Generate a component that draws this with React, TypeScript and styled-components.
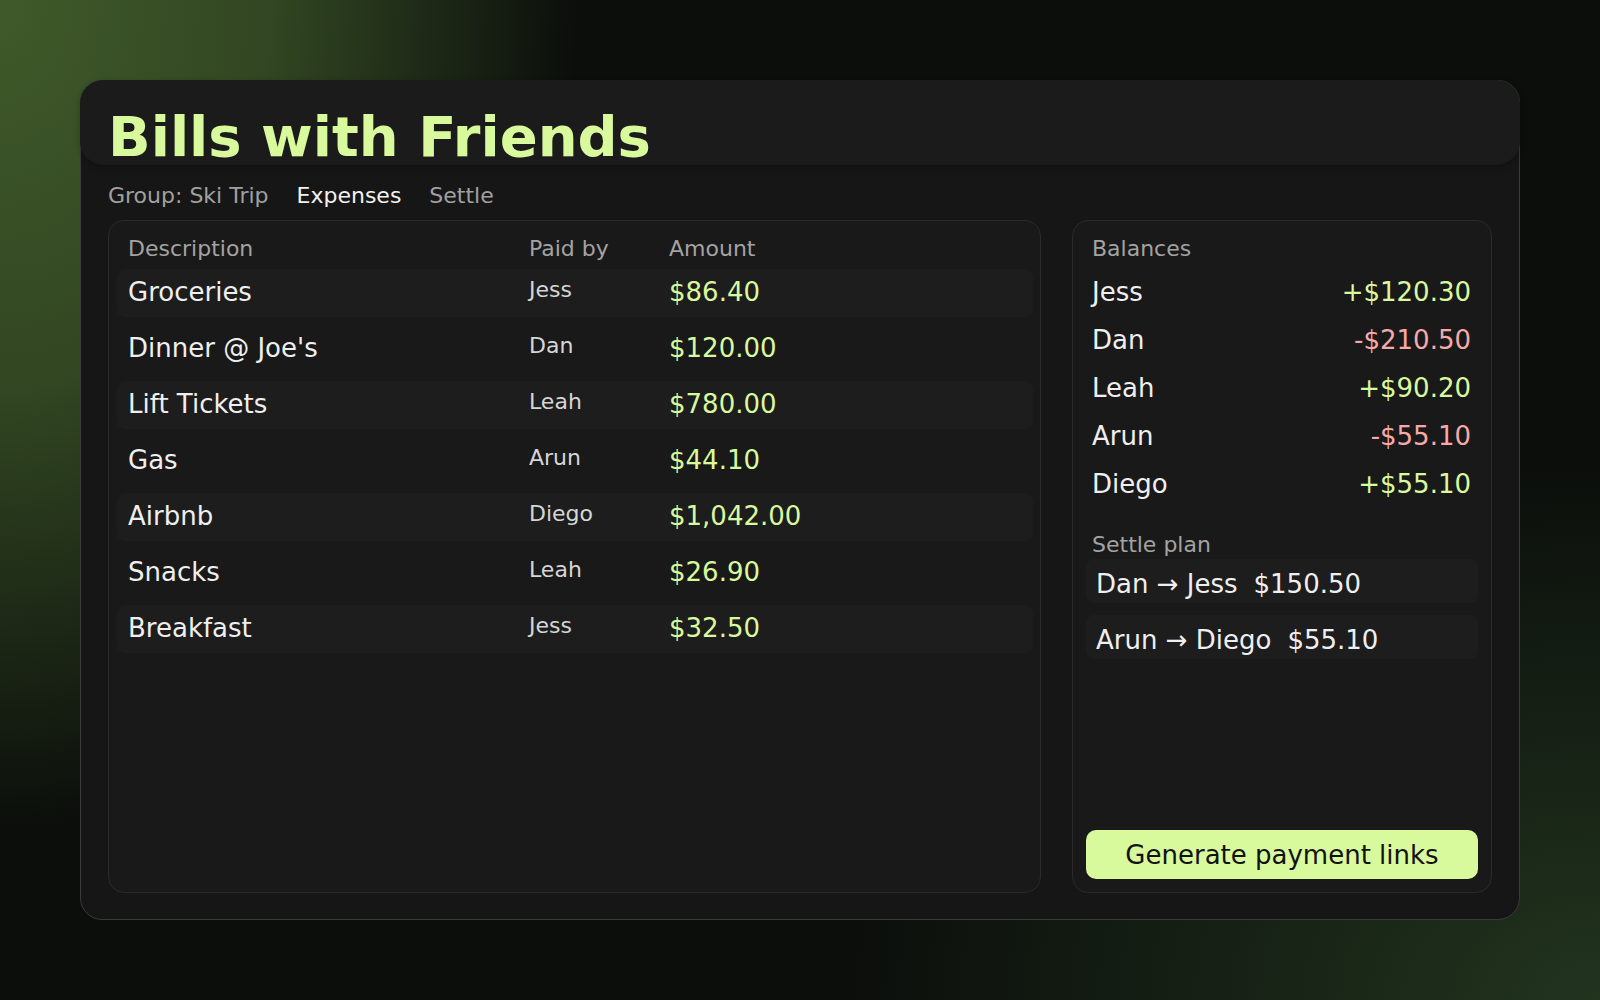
import React from 'react';
import styled, { createGlobalStyle } from 'styled-components';

type Expense = { desc: string; payer: string; amount: string };
type Balance = { name: string; amount: string; owes: boolean };
type Transfer = { from: string; to: string; amount: string };

const expenses: Expense[] = [
  { desc: 'Groceries', payer: 'Jess', amount: '$86.40' },
  { desc: "Dinner @ Joe's", payer: 'Dan', amount: '$120.00' },
  { desc: 'Lift Tickets', payer: 'Leah', amount: '$780.00' },
  { desc: 'Gas', payer: 'Arun', amount: '$44.10' },
  { desc: 'Airbnb', payer: 'Diego', amount: '$1,042.00' },
  { desc: 'Snacks', payer: 'Leah', amount: '$26.90' },
  { desc: 'Breakfast', payer: 'Jess', amount: '$32.50' },
];

const balances: Balance[] = [
  { name: 'Jess', amount: '+$120.30', owes: false },
  { name: 'Dan', amount: '-$210.50', owes: true },
  { name: 'Leah', amount: '+$90.20', owes: false },
  { name: 'Arun', amount: '-$55.10', owes: true },
  { name: 'Diego', amount: '+$55.10', owes: false },
];

const plan: Transfer[] = [
  { from: 'Dan', to: 'Jess', amount: '$150.50' },
  { from: 'Arun', to: 'Diego', amount: '$55.10' },
];

export default function App(): React.ReactElement {
  return (
    <>
      <GlobalStyle />
      <Page>
        <Card>
          <Header>
            <Title>Bills with Friends</Title>
          </Header>
          <Tabs>
            <Tab>Group: Ski Trip</Tab>
            <Tab $active>Expenses</Tab>
            <Tab>Settle</Tab>
          </Tabs>
          <Body>
            <Panel>
              <TableHead>
                <span>Description</span>
                <span>Paid by</span>
                <span>Amount</span>
              </TableHead>
              <Rows>
                {expenses.map((e, i) => (
                  <ExpenseRow key={e.desc} $striped={i % 2 === 0}>
                    <Desc>{e.desc}</Desc>
                    <Payer>{e.payer}</Payer>
                    <Money>{e.amount}</Money>
                  </ExpenseRow>
                ))}
              </Rows>
            </Panel>
            <SidePanel>
              <Label>Balances</Label>
              {balances.map(b => (
                <BalanceRow key={b.name}>
                  <span>{b.name}</span>
                  <BalanceAmount $owes={b.owes}>{b.amount}</BalanceAmount>
                </BalanceRow>
              ))}
              <PlanLabel>Settle plan</PlanLabel>
              <PlanList>
                {plan.map(t => (
                  <PlanRow key={t.from}>
                    {t.from} → {t.to}
                    <PlanAmount>{t.amount}</PlanAmount>
                  </PlanRow>
                ))}
              </PlanList>
              <Button type="button">Generate payment links</Button>
            </SidePanel>
          </Body>
        </Card>
      </Page>
    </>
  );
}

const GlobalStyle = createGlobalStyle`
  html, body {
    margin: 0;
    padding: 0;
  }
  body {
    font-family: 'DejaVu Sans', 'Liberation Sans', sans-serif;
    color: #efefef;
    background:
      radial-gradient(ellipse 680px 980px at 0% 0%, rgba(64, 90, 42, 1) 0%, rgba(56, 80, 38, 0.85) 40%, rgba(11, 14, 11, 0) 85%),
      radial-gradient(ellipse 900px 640px at 100% 100%, rgba(34, 52, 30, 1) 0%, rgba(28, 44, 26, 0.6) 45%, rgba(11, 14, 11, 0) 85%),
      #0b0e0b;
    min-height: 100vh;
  }
`;

const Page = styled.div`
  box-sizing: border-box;
  height: 1000px;
  padding: 80px;
`;

const Card = styled.div`
  box-sizing: border-box;
  width: 1440px;
  height: 840px;
  display: flex;
  flex-direction: column;
  background: #161616;
  border: 1px solid #3a3a3a;
  border-radius: 22px;
`;

const Header = styled.header`
  box-sizing: border-box;
  height: 85px;
  margin: -1px -1px 0;
  padding: 29px 28px 0;
  background: #1b1b1b;
  border-radius: 24px;
  box-shadow: 0 2px 6px rgba(0, 0, 0, 0.25);
`;

const Title = styled.h1`
  margin: 0;
  font-size: 56px;
  line-height: 56px;
  font-weight: 700;
  color: #d9f99d;
`;

const Tabs = styled.nav`
  display: flex;
  gap: 28px;
  margin: 18px 0 11px;
  padding: 0 27px;
`;

const Tab = styled.span<{ $active?: boolean }>`
  font-size: 22px;
  line-height: 26px;
  color: ${p => (p.$active ? '#f2f2f2' : '#a0a0a0')};
`;

const Body = styled.div`
  flex: 1;
  display: grid;
  grid-template-columns: 1fr 420px;
  gap: 31px;
  padding: 0 27px 26px;
  min-height: 0;
`;

const Panel = styled.section`
  box-sizing: border-box;
  background: #191919;
  border: 1px solid #2a2a2a;
  border-radius: 16px;
  padding: 15px 7px 8px 8px;
`;

const cols = `
  display: grid;
  grid-template-columns: 401px 140px 1fr;
  padding: 0 12px 0 11px;
`;

const TableHead = styled.div`
  ${cols};
  font-size: 22px;
  line-height: 26px;
  color: #a3a3a3;
  margin-bottom: 7px;
`;

const Rows = styled.div`
  display: flex;
  flex-direction: column;
  gap: 8px;
`;

const ExpenseRow = styled.div<{ $striped: boolean }>`
  ${cols};
  box-sizing: border-box;
  height: 48px;
  padding-top: 8px;
  align-items: start;
  border-radius: 8px;
  background: ${p => (p.$striped ? '#1d1d1d' : 'transparent')};
`;

const Desc = styled.span`
  font-size: 26px;
  color: #efefef;
`;

const Payer = styled.span`
  font-size: 22px;
  color: #d6d6d6;
`;

const Money = styled.span`
  font-size: 26px;
  color: #d9f99d;
`;

const SidePanel = styled.aside`
  box-sizing: border-box;
  display: flex;
  flex-direction: column;
  background: #191919;
  border: 1px solid #2a2a2a;
  border-radius: 16px;
  padding: 15px 13px 13px 13px;
`;

const Label = styled.div`
  font-size: 22px;
  line-height: 26px;
  color: #a3a3a3;
  padding: 0 6px;
  margin-bottom: 6px;
`;

const PlanLabel = styled(Label)`
  margin: 24px 0 1px;
`;

const BalanceRow = styled.div`
  height: 48px;
  display: flex;
  align-items: center;
  justify-content: space-between;
  padding: 0 7px 0 6px;
  font-size: 26px;
  color: #efefef;
`;

const BalanceAmount = styled.span<{ $owes: boolean }>`
  color: ${p => (p.$owes ? '#f6a9a9' : '#d9f99d')};
`;

const PlanList = styled.div`
  display: flex;
  flex-direction: column;
  gap: 12px;
`;

const PlanRow = styled.div`
  box-sizing: border-box;
  height: 44px;
  padding: 10px 10px 0;
  border-radius: 8px;
  background: #1d1d1d;
  font-size: 26px;
  color: #efefef;
  white-space: nowrap;
`;

const PlanAmount = styled.span`
  margin-left: 16px;
`;

const Button = styled.button`
  margin-top: auto;
  height: 49px;
  border: none;
  border-radius: 10px;
  background: #d9f99d;
  color: #121212;
  font-family: inherit;
  font-size: 26px;
  cursor: pointer;
`;
